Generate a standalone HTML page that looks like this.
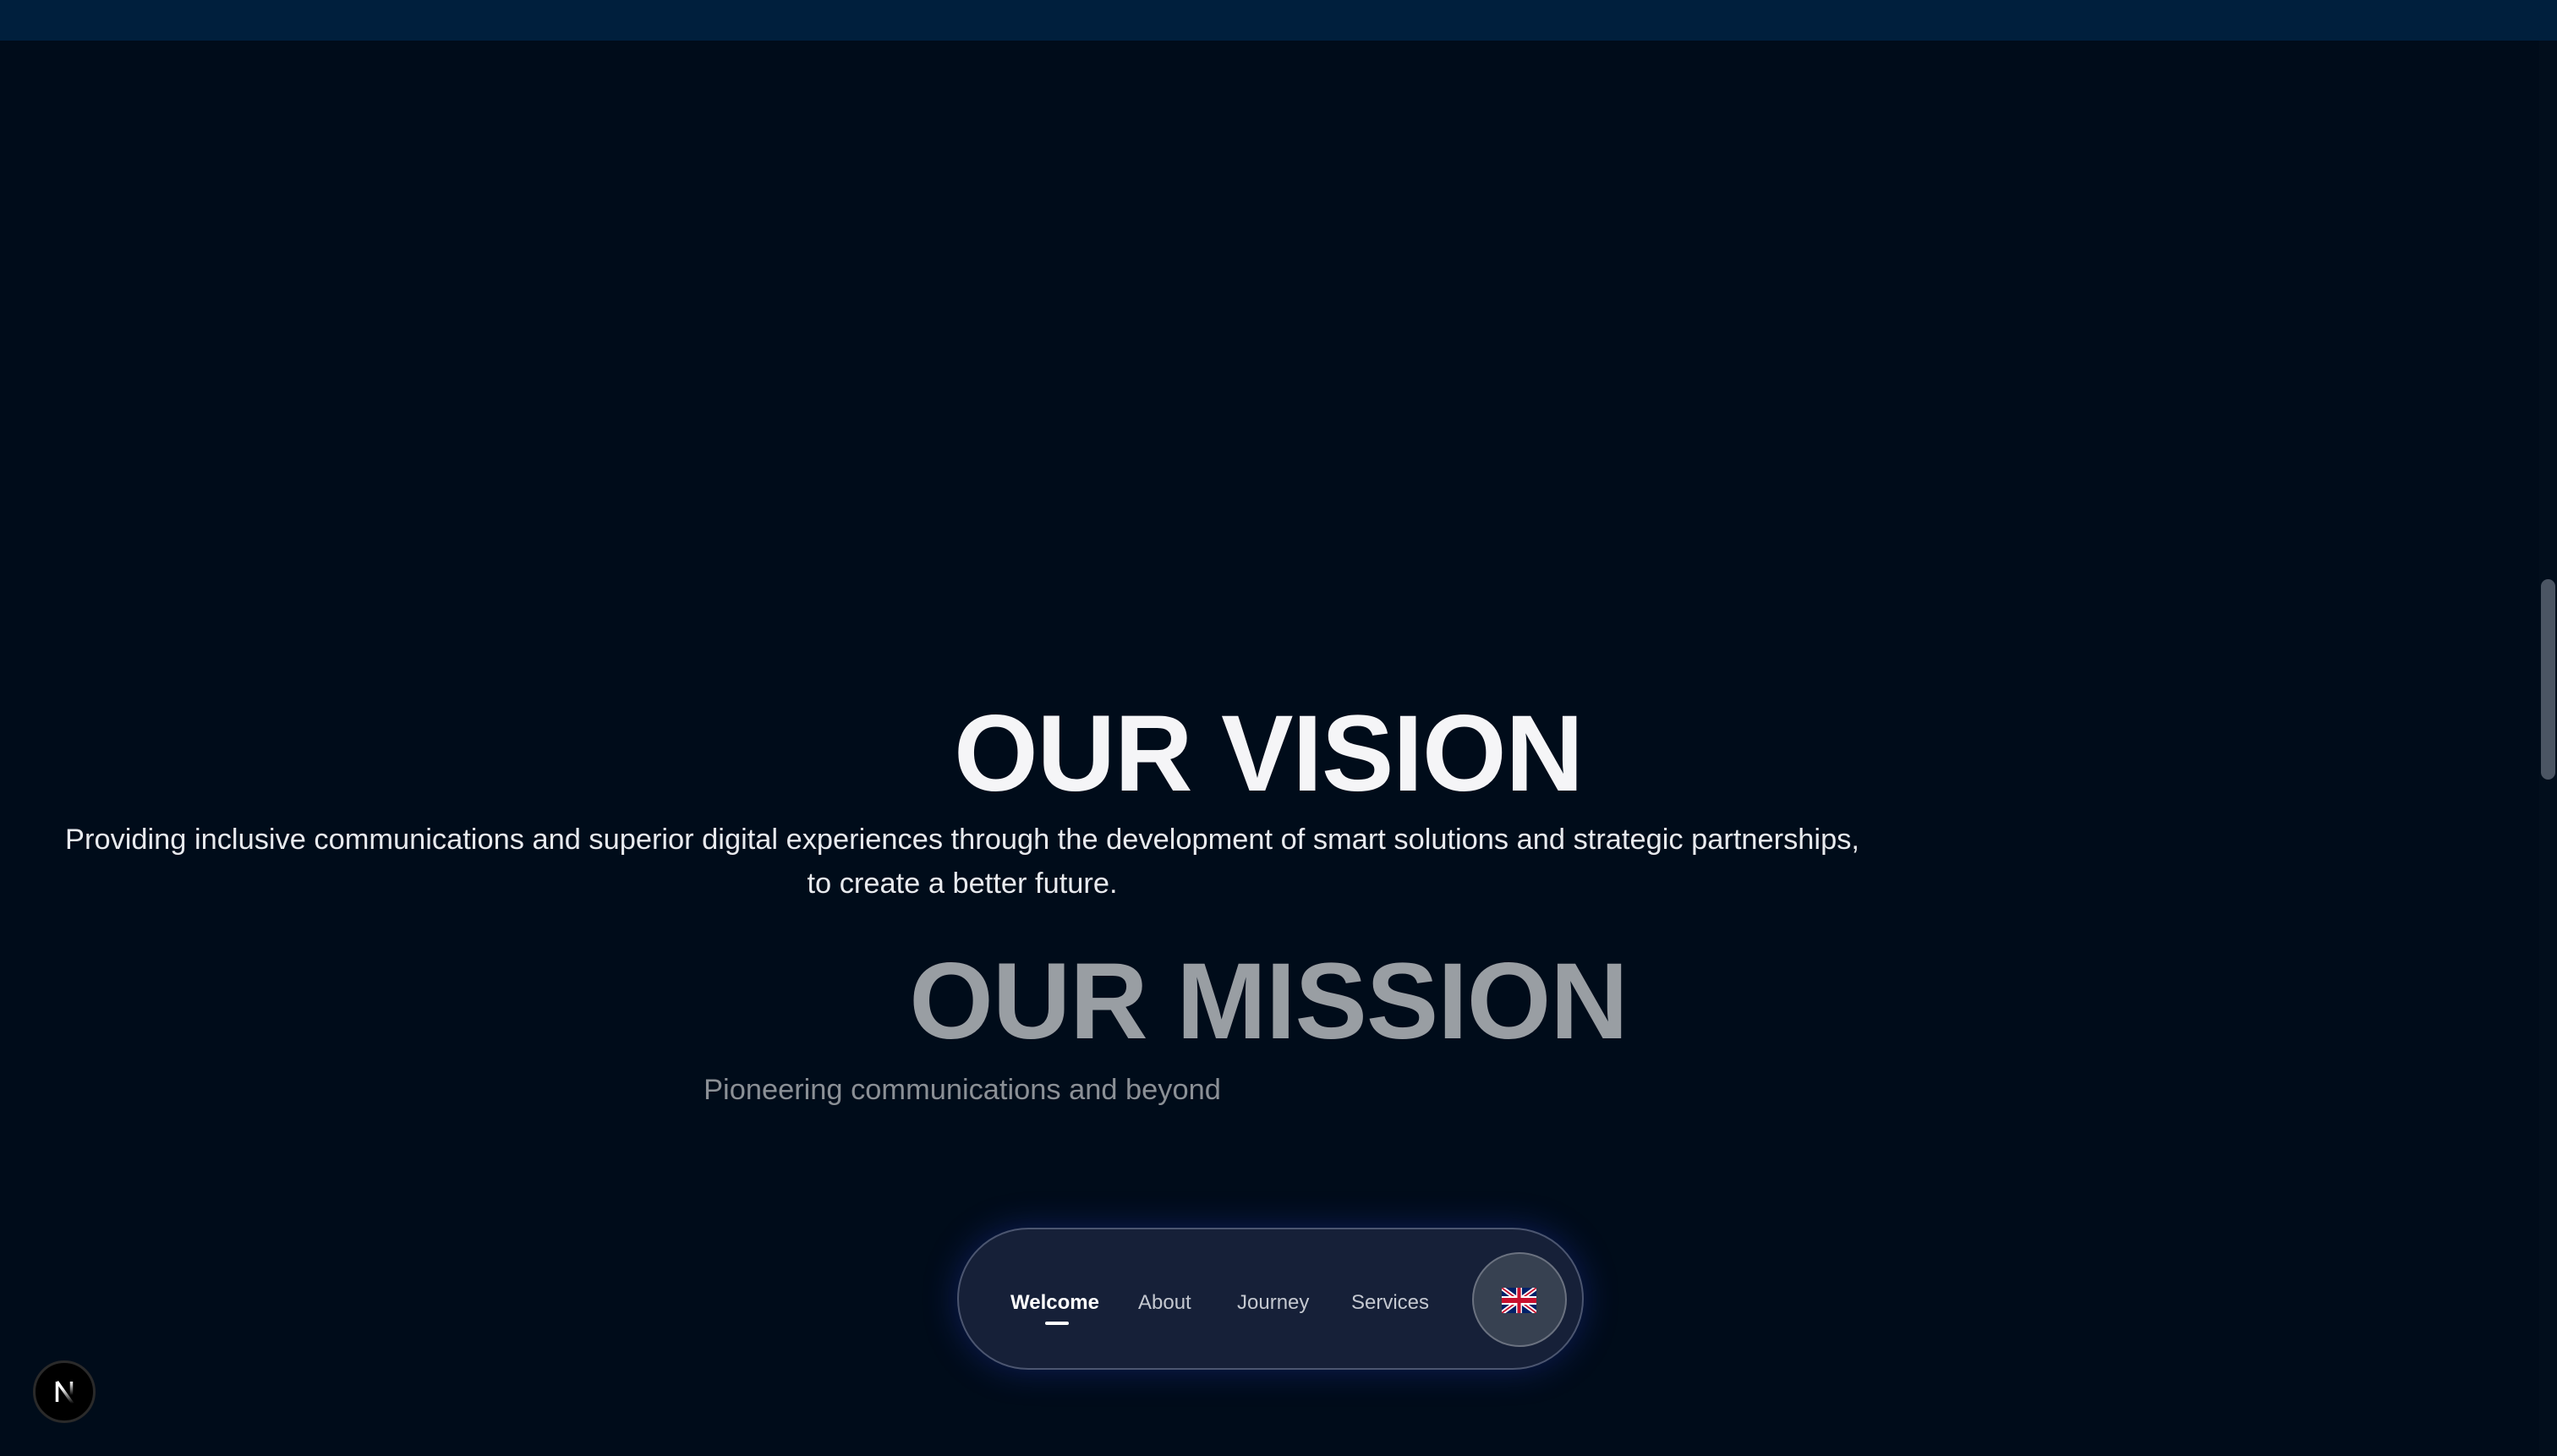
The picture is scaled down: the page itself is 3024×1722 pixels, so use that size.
<!DOCTYPE html>
<html><head><meta charset="utf-8"><style>
html,body{margin:0;padding:0;}
body{width:3024px;height:1722px;background:#000c1a;position:relative;overflow:hidden;font-family:"Liberation Sans",sans-serif;}
.top{position:absolute;left:0;top:0;width:3024px;height:48px;background:#001f3d;}
.sb{position:absolute;right:0;top:48px;width:21px;height:1674px;background:#020e1c;}
.thumb{position:absolute;right:2px;top:637px;width:17px;height:237px;border-radius:9px;background:#4b5563;}
.h{position:absolute;left:0;width:3000px;text-align:center;font-weight:bold;font-size:128px;line-height:1;letter-spacing:-1px;}
.p{position:absolute;left:0;width:2276px;text-align:center;font-size:34.4px;line-height:52px;}
.pill{position:absolute;left:1132px;top:1452px;width:737px;height:164px;border-radius:84px;background:#162038;border:2px solid #4c5670;box-shadow:0 0 40px rgba(40,60,200,0.35);}
.nav{position:absolute;top:1527px;font-size:24px;color:#c4c8d0;}
.flag{position:absolute;left:1741px;top:1481px;width:112px;height:112px;border-radius:50%;background:#374151;border:2px solid #6b7280;box-sizing:border-box;}
.n{position:absolute;left:39px;top:1609px;width:74px;height:74px;border-radius:50%;background:#000;border:3px solid #2a2a2a;box-sizing:border-box;}
</style></head><body>
<div class="top"></div>
<div class="sb"><div class="thumb"></div></div>
<div class="h" style="top:828px;color:#f5f5f7;">OUR VISION</div>
<div class="p" style="top:967px;color:#e8eaee;">Providing inclusive communications and superior digital experiences through the development of smart solutions and strategic partnerships,<br>to create a better future.</div>
<div class="h" style="top:1121px;color:#999ea3;">OUR MISSION</div>
<div class="p" style="top:1263px;color:#8b9096;">Pioneering communications and beyond</div>
<div class="pill"></div>
<div class="nav" style="left:1195px;color:#fff;font-weight:bold;">Welcome</div>
<div style="position:absolute;left:1236px;top:1563px;width:28px;height:4px;background:#fff;border-radius:2px;"></div>
<div class="nav" style="left:1346px;">About</div>
<div class="nav" style="left:1463px;">Journey</div>
<div class="nav" style="left:1598px;">Services</div>
<div class="flag"></div>
<svg style="position:absolute;left:1776px;top:1523px" width="41" height="30" viewBox="0 0 60 30" preserveAspectRatio="none">
<rect width="60" height="30" fill="#012169"/>
<path d="M0,0 L60,30 M60,0 L0,30" stroke="#fff" stroke-width="6"/>
<path d="M0,0 L60,30 M60,0 L0,30" stroke="#C8102E" stroke-width="2"/>
<path d="M30,0 V30 M0,15 H60" stroke="#fff" stroke-width="10"/>
<path d="M30,0 V30 M0,15 H60" stroke="#C8102E" stroke-width="6"/>
</svg>
<div class="n"><svg width="68" height="68" viewBox="0 0 68 68" style="position:absolute;left:0;top:0">
<defs>
<linearGradient id="g" gradientUnits="userSpaceOnUse" x1="0" y1="30" x2="0" y2="48"><stop offset="0" stop-color="#fff"/><stop offset="1" stop-color="#fff" stop-opacity="0"/></linearGradient>
<linearGradient id="g2" gradientUnits="userSpaceOnUse" x1="0" y1="22" x2="0" y2="38"><stop offset="0" stop-color="#fff"/><stop offset="1" stop-color="#fff" stop-opacity="0"/></linearGradient>
</defs>
<path d="M25.5 46 V22" stroke="#fff" stroke-width="3.5" fill="none"/>
<path d="M25.5 22 L44 48" stroke="url(#g)" stroke-width="3.5" fill="none"/>
<path d="M42.5 22 V38" stroke="url(#g2)" stroke-width="3.5" fill="none"/>
</svg></div>
</body></html>
